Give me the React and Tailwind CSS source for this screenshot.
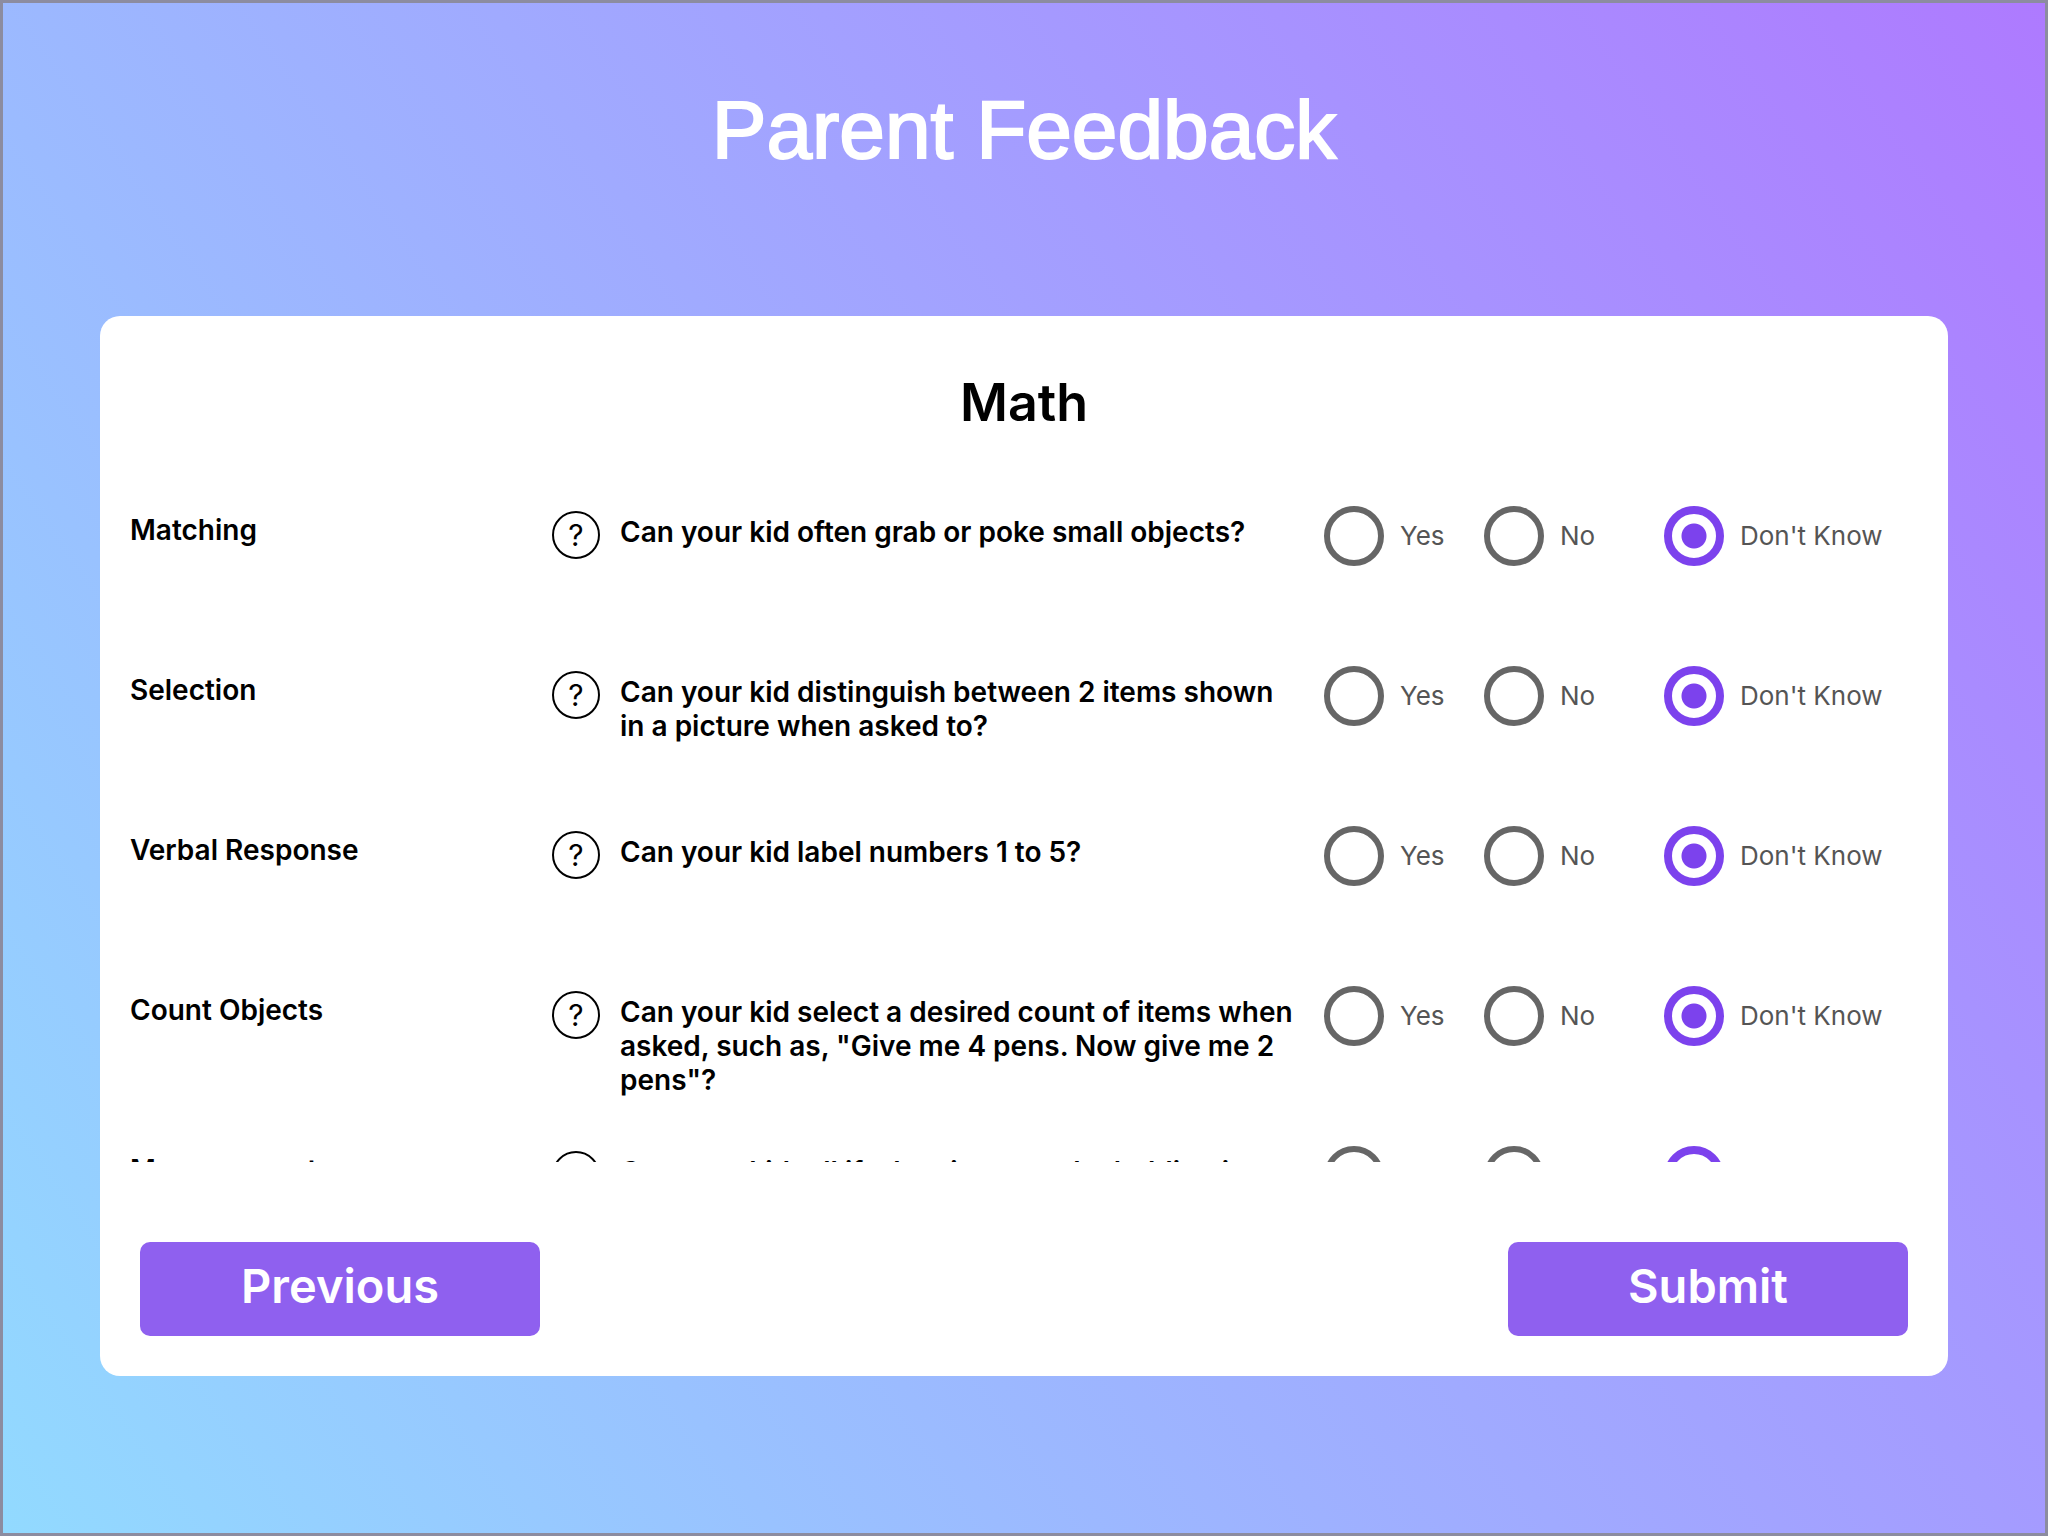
const rows = [
  { skill: "Matching", question: "Can your kid often grab or poke small objects?" },
  { skill: "Selection", question: "Can your kid distinguish between 2 items shown in a picture when asked to?" },
  { skill: "Verbal Response", question: "Can your kid label numbers 1 to 5?" },
  { skill: "Count Objects", question: 'Can your kid select a desired count of items when asked, such as, "Give me 4 pens. Now give me 2 pens"?' },
  { skill: "Measurement", question: "Can your kid tell if a box is empty by holding it versus a full one?" },
];

function Choice({ name, value, defaultChecked }) {
  return (
    <label className="flex items-center gap-4 whitespace-nowrap">
      <input
        type="radio"
        name={name}
        value={value}
        defaultChecked={defaultChecked}
        className="size-15 shrink-0 appearance-none rounded-full border-[6px] border-[#666666] checked:border-8 checked:border-[#7c42ed] checked:bg-[radial-gradient(circle,#7c42ed_12px,white_13px)]"
      />
      <span className="text-[26px] leading-8 text-[#555555]">{value}</span>
    </label>
  );
}

function Row({ skill, question }) {
  return (
    <div className="grid min-h-40 grid-cols-[422fr_68px_704fr_594px] items-start">
      <h3 className="pt-[7px] text-[28px] leading-[34px] font-semibold">{skill}</h3>
      <button
        type="button"
        aria-label={"Help: " + skill}
        className="mt-[5px] flex size-12 items-center justify-center rounded-full border-2 border-black text-[30px] leading-none"
      >
        ?
      </button>
      <p className="pt-[9px] pr-7 text-[28px] leading-[34px] font-semibold">{question}</p>
      <div role="radiogroup" aria-label={question} className="grid grid-cols-[160px_180px_1fr]">
        <Choice name={skill} value="Yes" />
        <Choice name={skill} value="No" />
        <Choice name={skill} value="Don't Know" defaultChecked />
      </div>
    </div>
  );
}

export default function App() {
  return (
    <main className="flex h-screen flex-col border-3 border-[#8c8ca0] bg-[linear-gradient(55deg,#92daff,#ae7aff)] bg-origin-border px-[97px] pb-[157px] font-['Inter',sans-serif] text-black">
      <h1 className="pt-[79px] pb-[138px] text-center font-['Liberation_Sans',sans-serif] text-[82px] leading-24 text-white [-webkit-text-stroke:2px_white]">
        Parent Feedback
      </h1>
      <section className="flex min-h-0 flex-1 flex-col rounded-[20px] bg-white px-[30px] pb-10">
        <h2 className="pt-[55px] pb-[71px] text-center text-[52px] leading-16 font-semibold">Math</h2>
        <div className="min-h-0 flex-1 overflow-y-auto [scrollbar-width:none]">
          {rows.map((row) => (
            <Row key={row.skill} {...row} />
          ))}
        </div>
        <div className="flex justify-between px-2.5 pt-20">
          <button type="button" className="h-[94px] w-[400px] rounded-[10px] bg-[#8f60ef] pb-1.5 text-[47px] font-semibold text-white">
            Previous
          </button>
          <button type="button" className="h-[94px] w-[400px] rounded-[10px] bg-[#8f60ef] pb-1.5 text-[47px] font-semibold text-white">
            Submit
          </button>
        </div>
      </section>
    </main>
  );
}
